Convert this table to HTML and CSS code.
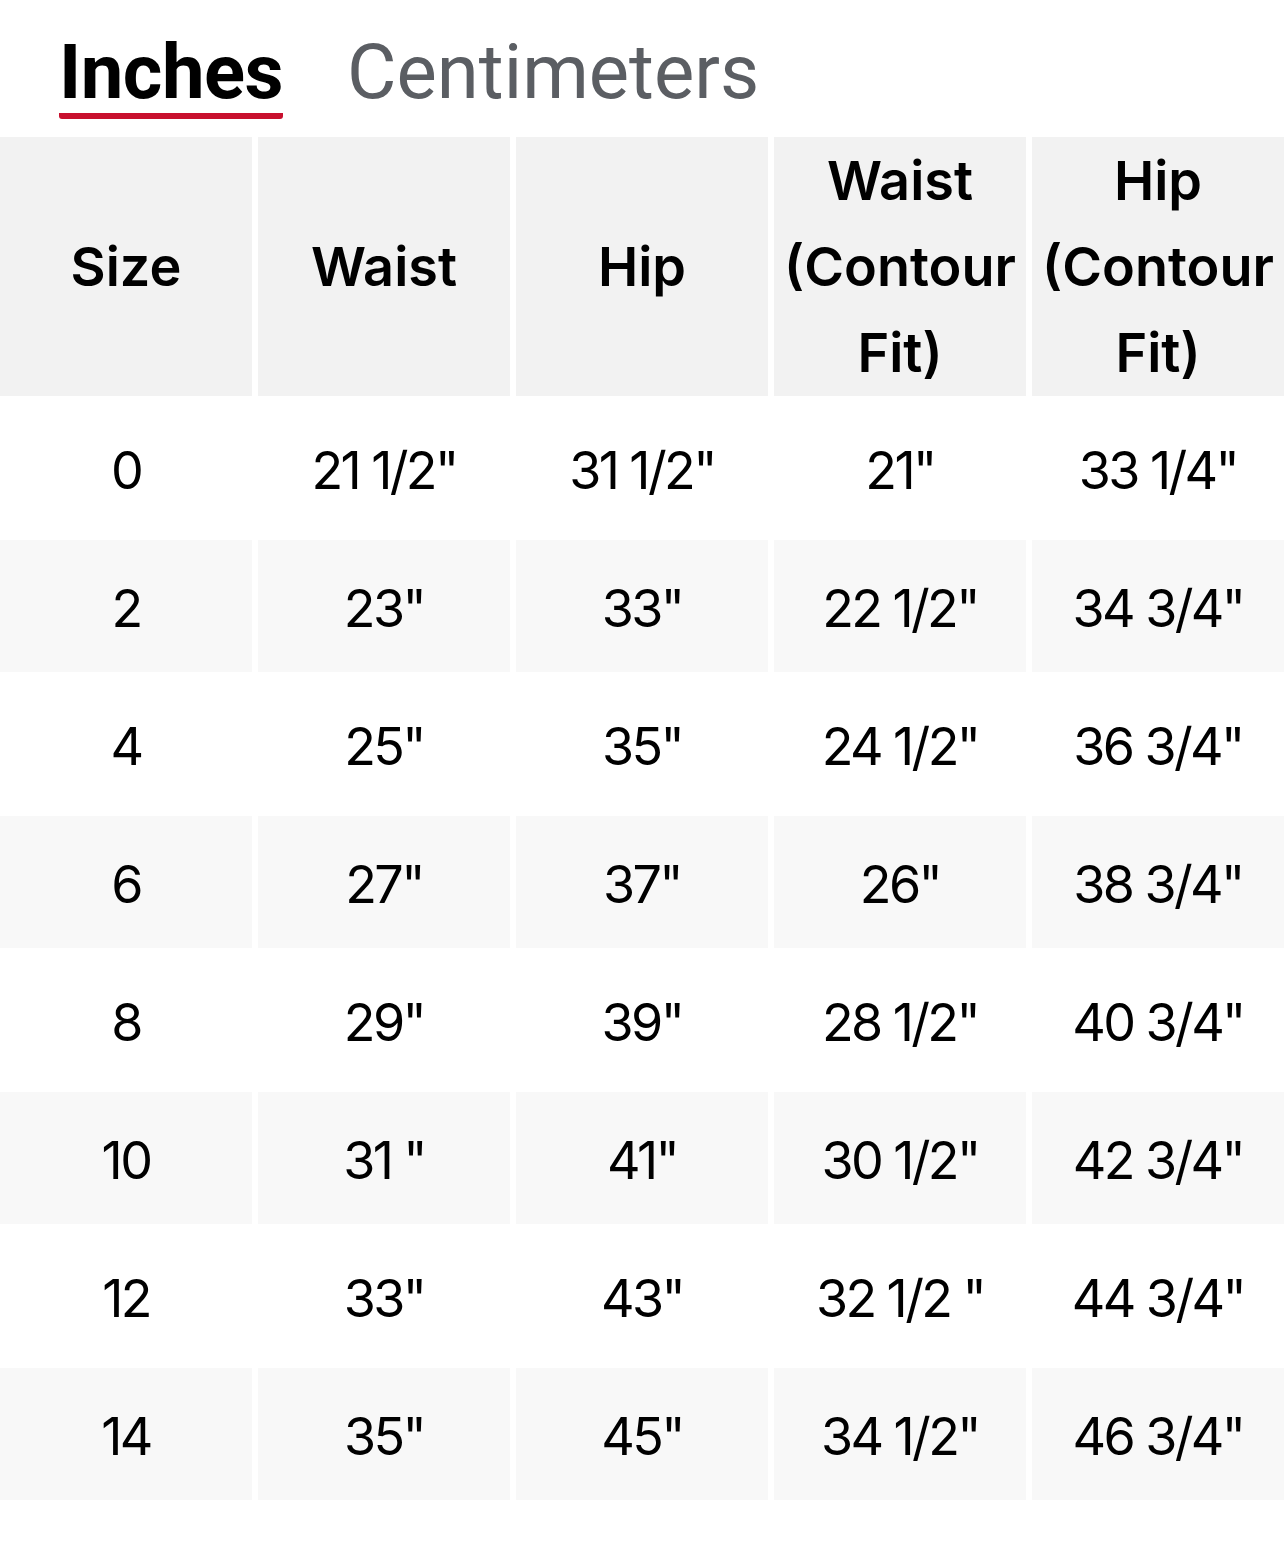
FILE: index.html
```html
<!DOCTYPE html>
<html lang="en">
<head>
<meta charset="utf-8">
<title>Size Chart</title>
<link rel="stylesheet" href="styles.css">
</head>
<body>
<div class="tabs">
  <span class="tab tab-active">Inches</span>
  <span class="tab">Centimeters</span>
</div>
<table class="chart">
  <thead>
    <tr>
      <th>Size</th>
      <th>Waist</th>
      <th>Hip</th>
      <th>Waist (Contour Fit)</th>
      <th>Hip (Contour Fit)</th>
    </tr>
  </thead>
  <tbody>
    <tr><td>0</td><td>21 1/2"</td><td>31 1/2"</td><td>21"</td><td>33 1/4"</td></tr>
    <tr><td>2</td><td>23"</td><td>33"</td><td>22 1/2"</td><td>34 3/4"</td></tr>
    <tr><td>4</td><td>25"</td><td>35"</td><td>24 1/2"</td><td>36 3/4"</td></tr>
    <tr><td>6</td><td>27"</td><td>37"</td><td>26"</td><td>38 3/4"</td></tr>
    <tr><td>8</td><td>29"</td><td>39"</td><td>28 1/2"</td><td>40 3/4"</td></tr>
    <tr><td>10</td><td>31 "</td><td>41"</td><td>30 1/2"</td><td>42 3/4"</td></tr>
    <tr><td>12</td><td>33"</td><td>43"</td><td>32 1/2 "</td><td>44 3/4"</td></tr>
    <tr><td>14</td><td>35"</td><td>45"</td><td>34 1/2"</td><td>46 3/4"</td></tr>
  </tbody>
</table>
</body>
</html>
```
FILE: styles.css
```css
html, body {
  margin: 0;
  padding: 0;
  background: #fff;
}
body {
  width: 1284px;
  overflow: hidden;
  font-family: "Inter", "Roboto", sans-serif;
  color: #000;
}
.tabs {
  display: flex;
  align-items: flex-start;
  gap: 64px;
  box-sizing: border-box;
  height: 131px;
  padding: 31px 0 0 59px;
}
.tab {
  font-family: "Roboto", "Liberation Sans", sans-serif;
  font-size: 76px;
  line-height: 82px;
  color: #5b5e63;
  font-weight: 400;
}
.tab-active {
  color: #000;
  font-weight: 700;
  letter-spacing: -0.5px;
  border-bottom: 6px solid #c8102e;
  border-radius: 3px;
}
.chart {
  border-collapse: separate;
  border-spacing: 6px;
  width: calc(100% + 12px);
  margin: 0 -6px;
  table-layout: fixed;
}
.chart th {
  background: #f2f2f2;
  font-family: "Inter", sans-serif;
  font-weight: 600;
  font-size: 54px;
  line-height: 86px;
  height: 259px;
  padding: 0;
  vertical-align: middle;
  text-align: center;
  color: #000;
}
.chart td {
  font-family: "Inter", sans-serif;
  font-weight: 400;
  font-size: 52px;
  letter-spacing: -2.6px;
  height: 128px;
  padding: 4px 0 0;
  text-align: center;
  vertical-align: middle;
}
.chart tbody tr:nth-child(even) td {
  background: #f8f8f8;
}
```
